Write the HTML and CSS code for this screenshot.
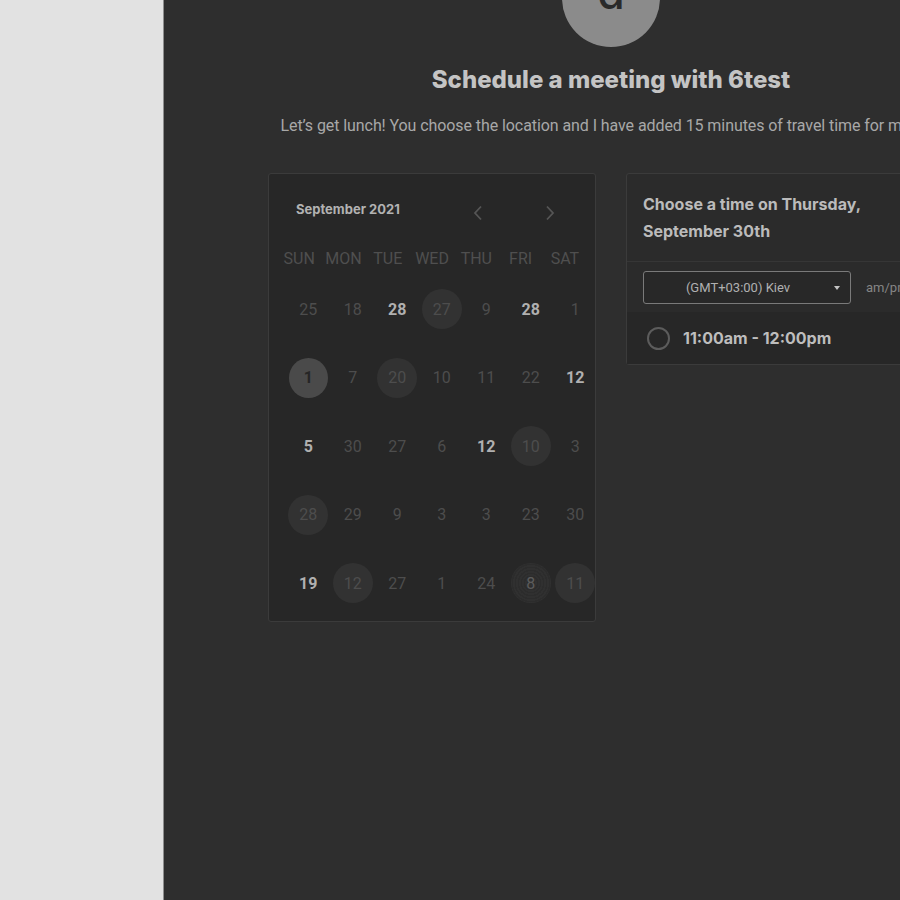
FILE: index.html
```html
<!DOCTYPE html>
<html>
<head>
<meta charset="utf-8">
<link rel="stylesheet" href="styles.css">
</head>
<body>
<div class="page">
  <aside class="side"></aside>
  <main class="main">
    <div class="content">
      <div class="avatar"><span class="avatar-letter">d</span></div>
      <h1 class="title">Schedule a meeting with 6test</h1>
      <p class="subtitle">Let’s get lunch! You choose the location and I have added 15 minutes of travel time for me too.</p>
      <div class="cards">
        <section class="calendar">
          <div class="cal-head">
            <span class="cal-month">September 2021</span>
            <span class="chev chev-prev"><svg width="10" height="16" viewBox="0 0 10 16"><path d="M8 1.5 L2 8 L8 14.5" fill="none" stroke="#555" stroke-width="1.8"/></svg></span>
            <span class="chev chev-next"><svg width="10" height="16" viewBox="0 0 10 16"><path d="M2 1.5 L8 8 L2 14.5" fill="none" stroke="#555" stroke-width="1.8"/></svg></span>
          </div>
          <div class="weekdays">
            <span>SUN</span><span>MON</span><span>TUE</span><span>WED</span><span>THU</span><span>FRI</span><span>SAT</span>
          </div>
          <div class="dates">
            <span class="d">25</span><span class="d">18</span><span class="d b">28</span><span class="d c">27</span><span class="d">9</span><span class="d b">28</span><span class="d">1</span>
            <span class="d sel">1</span><span class="d">7</span><span class="d c">20</span><span class="d">10</span><span class="d">11</span><span class="d">22</span><span class="d b">12</span>
            <span class="d b">5</span><span class="d">30</span><span class="d">27</span><span class="d">6</span><span class="d b">12</span><span class="d c">10</span><span class="d">3</span>
            <span class="d c">28</span><span class="d">29</span><span class="d">9</span><span class="d">3</span><span class="d">3</span><span class="d">23</span><span class="d">30</span>
            <span class="d b">19</span><span class="d c">12</span><span class="d">27</span><span class="d">1</span><span class="d">24</span><span class="d dot">8</span><span class="d c">11</span>
          </div>
        </section>
        <section class="times">
          <div class="times-head">Choose a time on Thursday, September 30th</div>
          <div class="tz-row">
            <div class="select">(GMT+03:00) Kiev<span class="caret"></span></div>
            <span class="ampm">am/pm</span>
          </div>
          <div class="slot">
            <span class="radio"></span>
            <span class="slot-text">11:00am - 12:00pm</span>
          </div>
        </section>
      </div>
    </div>
  </main>
</div>
</body>
</html>
```
FILE: styles.css
```css
* { box-sizing: border-box; }
html, body { margin: 0; padding: 0; }
body {
  width: 900px;
  height: 900px;
  overflow: hidden;
  background: #2e2e2e;
  font-family: Roboto, "Liberation Sans", sans-serif;
}
.page {
  display: flex;
  height: 900px;
}
.side {
  width: 164px;
  flex: none;
  background: #e2e2e2;
  border-right: 1px solid #8e8e8e;
}
.main {
  flex: none;
  width: 736px;
  overflow: hidden;
  background: #2e2e2e;
}
.content {
  width: 894px;
  display: flex;
  flex-direction: column;
  align-items: center;
}
.avatar {
  width: 98px;
  height: 98px;
  margin-top: -51px;
  border-radius: 50%;
  background: #8b8b8b;
  display: flex;
  justify-content: center;
  align-items: center;
  overflow: hidden;
}
.avatar-letter {
  font-family: Inter, "Liberation Sans", sans-serif;
  font-size: 44px;
  line-height: 1;
  color: #2a2a2a;
  font-weight: 500;
  margin-top: -10px;
}
.title {
  margin: 18px 0 0;
  font-family: Inter, "Liberation Sans", sans-serif;
  font-weight: 800;
  font-size: 24px;
  line-height: 30px;
  color: #c4c4c4;
  white-space: nowrap;
}
.subtitle {
  margin: 20px 0 0;
  font-size: 16px;
  line-height: 22px;
  color: #a8a8a8;
  white-space: nowrap;
  letter-spacing: -0.08px;
}
.cards {
  margin-top: 36px;
  display: flex;
  gap: 30px;
  align-items: flex-start;
}
.calendar {
  width: 328px;
  height: 449px;
  background: #272727;
  border: 1px solid #3b3b3b;
  border-radius: 3px;
  padding: 0 0 0 8px;
}
.cal-head {
  height: 70px;
  display: flex;
  align-items: center;
  padding-left: 19px;
}
.cal-month {
  font-family: Inter, "Liberation Sans", sans-serif;
  font-weight: 700;
  font-size: 13px;
  color: #b2b2b2;
  width: 177px;
}
.chev {
  display: flex;
  width: 10px;
  height: 16px;
  margin-top: 7px;
}
.chev-next { margin-left: 62px; }
.weekdays {
  display: grid;
  grid-template-columns: repeat(7, 44.3px);
  height: 28px;
  align-items: center;
  font-size: 16px;
  color: #4f4f4f;
}
.weekdays span { text-align: center; }
.dates {
  margin-left: 9px;
  margin-top: 3px;
  display: grid;
  grid-template-columns: repeat(7, 44.5px);
  grid-auto-rows: 68.5px;
  align-items: center;
  justify-items: center;
}
.d {
  width: 40px;
  height: 40px;
  border-radius: 50%;
  display: flex;
  align-items: center;
  justify-content: center;
  font-size: 16px;
  color: #4d4d4d;
}
.d.b { color: #b0b0b0; font-weight: 700; }
.d.c { background: #323232; }
.d.dot {
  color: #5c5c5c;
  background: repeating-radial-gradient(circle, #2c2c2c 0 1.5px, #303030 1.5px 3px);
}
.d.sel {
  background: #4a4a4a;
  color: #262626;
  font-weight: 700;
  width: 39px;
}
.times {
  width: 328px;
  border: 1px solid #3b3b3b;
  border-radius: 3px;
  background: #2b2b2b;
}
.times-head {
  padding: 17px 40px 16px 16px;
  font-family: Inter, "Liberation Sans", sans-serif;
  font-weight: 700;
  font-size: 16px;
  line-height: 27px;
  color: #bbbbbb;
  border-bottom: 1px solid #363636;
}
.tz-row {
  height: 50px;
  display: flex;
  align-items: center;
  padding-left: 16px;
  gap: 15px;
}
.select {
  width: 208px;
  height: 33px;
  border: 1px solid #7a7a7a;
  border-radius: 3px;
  background: #282828;
  display: flex;
  align-items: center;
  justify-content: center;
  font-size: 13px;
  color: #b0b0b0;
  position: relative;
  padding-right: 18px;
}
.caret {
  position: absolute;
  right: 10px;
  top: 14px;
  width: 0;
  height: 0;
  border-left: 3.5px solid transparent;
  border-right: 3.5px solid transparent;
  border-top: 4px solid #c4c4c4;
}
.ampm {
  font-size: 13px;
  color: #858585;
}
.slot {
  height: 52px;
  background: #272727;
  display: flex;
  align-items: center;
  padding-left: 20px;
  gap: 13px;
}
.radio {
  width: 23px;
  height: 23px;
  border-radius: 50%;
  border: 2px solid #5c5c5c;
}
.slot-text {
  font-family: Inter, "Liberation Sans", sans-serif;
  font-weight: 700;
  font-size: 16px;
  color: #bdbdbd;
}
```
